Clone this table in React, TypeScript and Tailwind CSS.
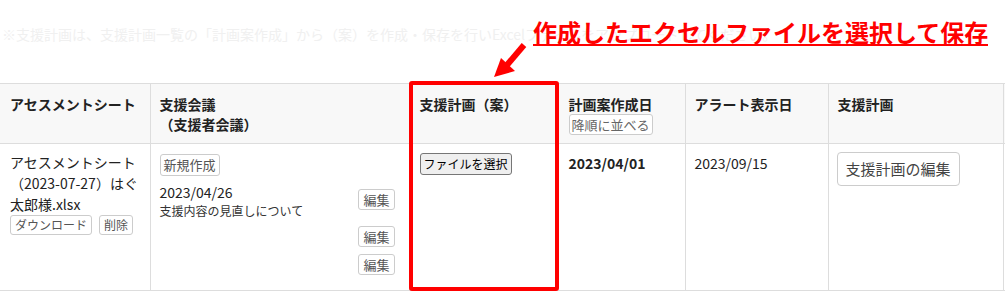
import React from "react";

const btn =
  "inline-block border border-[#cccccc] rounded-[3px] bg-white text-[#555] leading-[18px]";

export default function App() {
  return (
    <div
      className="relative w-[1005px] h-[298px] overflow-hidden bg-white text-[#222]"
      style={{ fontFamily: '"Noto Sans CJK JP", "Noto Sans", sans-serif' }}
    >
      {/* top note */}
      <div className="h-[83px] pt-[24px] pl-[2px] text-[14px] leading-[20px] text-[#f0f0f0] whitespace-nowrap">
        ※支援計画は、支援計画一覧の「計画案作成」から（案）を作成・保存を行いExcelファイルをアップロードしてください。
      </div>

      {/* table */}
      <table className="table-fixed border-collapse w-[1045px] text-[14px] leading-[20px]">
        <colgroup>
          <col className="w-[150px]" />
          <col className="w-[259px]" />
          <col className="w-[147px]" />
          <col className="w-[129px]" />
          <col className="w-[143px]" />
          <col className="w-[175px]" />
          <col className="w-[42px]" />
        </colgroup>
        <thead>
          <tr className="bg-[#f8f8f8] h-[60px] align-top font-bold text-[#222]">
            <th className="text-left font-bold border-y border-r border-[#dddddd] px-[10px] pt-[10px]">
              アセスメントシート
            </th>
            <th className="text-left font-bold border border-[#dddddd] px-[9px] pt-[10px]">
              支援会議
              <br />
              （支援者会議）
            </th>
            <th className="text-left font-bold border border-[#dddddd] px-[10px] pt-[10px]">
              支援計画（案）
            </th>
            <th className="text-left font-bold border border-[#dddddd] px-[12px] pt-[10px]">
              <div>計画案作成日</div>
              <button className="mt-0 inline-block border border-[#cccccc] rounded-[3px] bg-white text-[#666] text-[13px] leading-[19px] px-[2px] font-normal">
                降順に並べる
              </button>
            </th>
            <th className="text-left font-bold border border-[#dddddd] px-[9px] pt-[10px]">
              アラート表示日
            </th>
            <th className="text-left font-bold border border-[#dddddd] px-[9px] pt-[10px]">
              支援計画
            </th>
            <th className="border-y border-[#dddddd]"></th>
          </tr>
        </thead>
        <tbody>
          <tr className="align-top h-[147px]">
            <td className="border-y border-r border-[#dddddd] px-[10px] pt-[8px]">
              <div className="text-[14px] leading-[21px] text-[#222]">
                アセスメントシート（2023-07-27）はぐ太郎様.xlsx
              </div>
              <div className="flex gap-[7px] mt-0">
                <button className={`${btn} text-[12px] px-[4px]`}>ダウンロード</button>
                <button className={`${btn} text-[12px] px-[4px]`}>削除</button>
              </div>
            </td>
            <td className="border border-[#dddddd] pl-[9px] pr-[14px] pt-[10px]">
              <button className={`${btn} text-[13px] leading-[20px] px-[3px]`}>新規作成</button>
              <div className="mt-[6px] flex flex-col gap-[7px]">
                <div className="flex items-center justify-between">
                  <div>
                    <div className="text-[14px] leading-[20px] text-[#222]">2023/04/26</div>
                    <div className="text-[12px] leading-[17px] text-[#333]">支援内容の見直しについて</div>
                  </div>
                  <button className={`${btn} text-[13px] leading-[19px] px-[4px] -mt-[2px]`}>編集</button>
                </div>
                <div className="flex justify-end">
                  <button className={`${btn} text-[13px] leading-[19px] px-[4px]`}>編集</button>
                </div>
                <div className="flex justify-end">
                  <button className={`${btn} text-[13px] leading-[19px] px-[4px]`}>編集</button>
                </div>
              </div>
            </td>
            <td className="border border-[#dddddd] px-[10px] pt-[9px]">
              <button className="inline-block border border-[#767676] rounded-[3px] bg-[#efefef] text-black text-[12px] leading-[20px] px-[3px]">
                ファイルを選択
              </button>
            </td>
            <td className="border border-[#dddddd] px-[12px] pt-[9px] font-bold text-[#222]">
              2023/04/01
            </td>
            <td className="border border-[#dddddd] px-[9px] pt-[9px] text-[#222]">
              2023/09/15
            </td>
            <td className="border border-[#dddddd] px-[8px] pt-[8px]">
              <button className="inline-block border border-[#cccccc] rounded-[4px] bg-white text-[#444] text-[15px] leading-[32px] px-[8px]">
                支援計画の編集
              </button>
            </td>
            <td className="border-y border-[#dddddd]"></td>
          </tr>
        </tbody>
      </table>

      {/* annotation overlays */}
      <div className="absolute left-[533px] top-[19px] text-[24px] leading-[25px] font-bold text-[#ff0000] whitespace-nowrap border-b-2 border-[#ff0000]">
        作成したエクセルファイルを選択して保存
      </div>
      <svg
        className="absolute left-[490px] top-[42px]"
        width="40"
        height="38"
        viewBox="0 0 40 38"
      >
        <line x1="17" y1="23" x2="34" y2="3" stroke="#ff0000" strokeWidth="6" />
        <polygon points="4,35 11,16 25,29" fill="#ff0000" />
      </svg>
      <div className="absolute left-[409px] top-[81px] w-[150px] h-[210px] border-4 border-[#ff0000] rounded-[3px]" />
    </div>
  );
}
